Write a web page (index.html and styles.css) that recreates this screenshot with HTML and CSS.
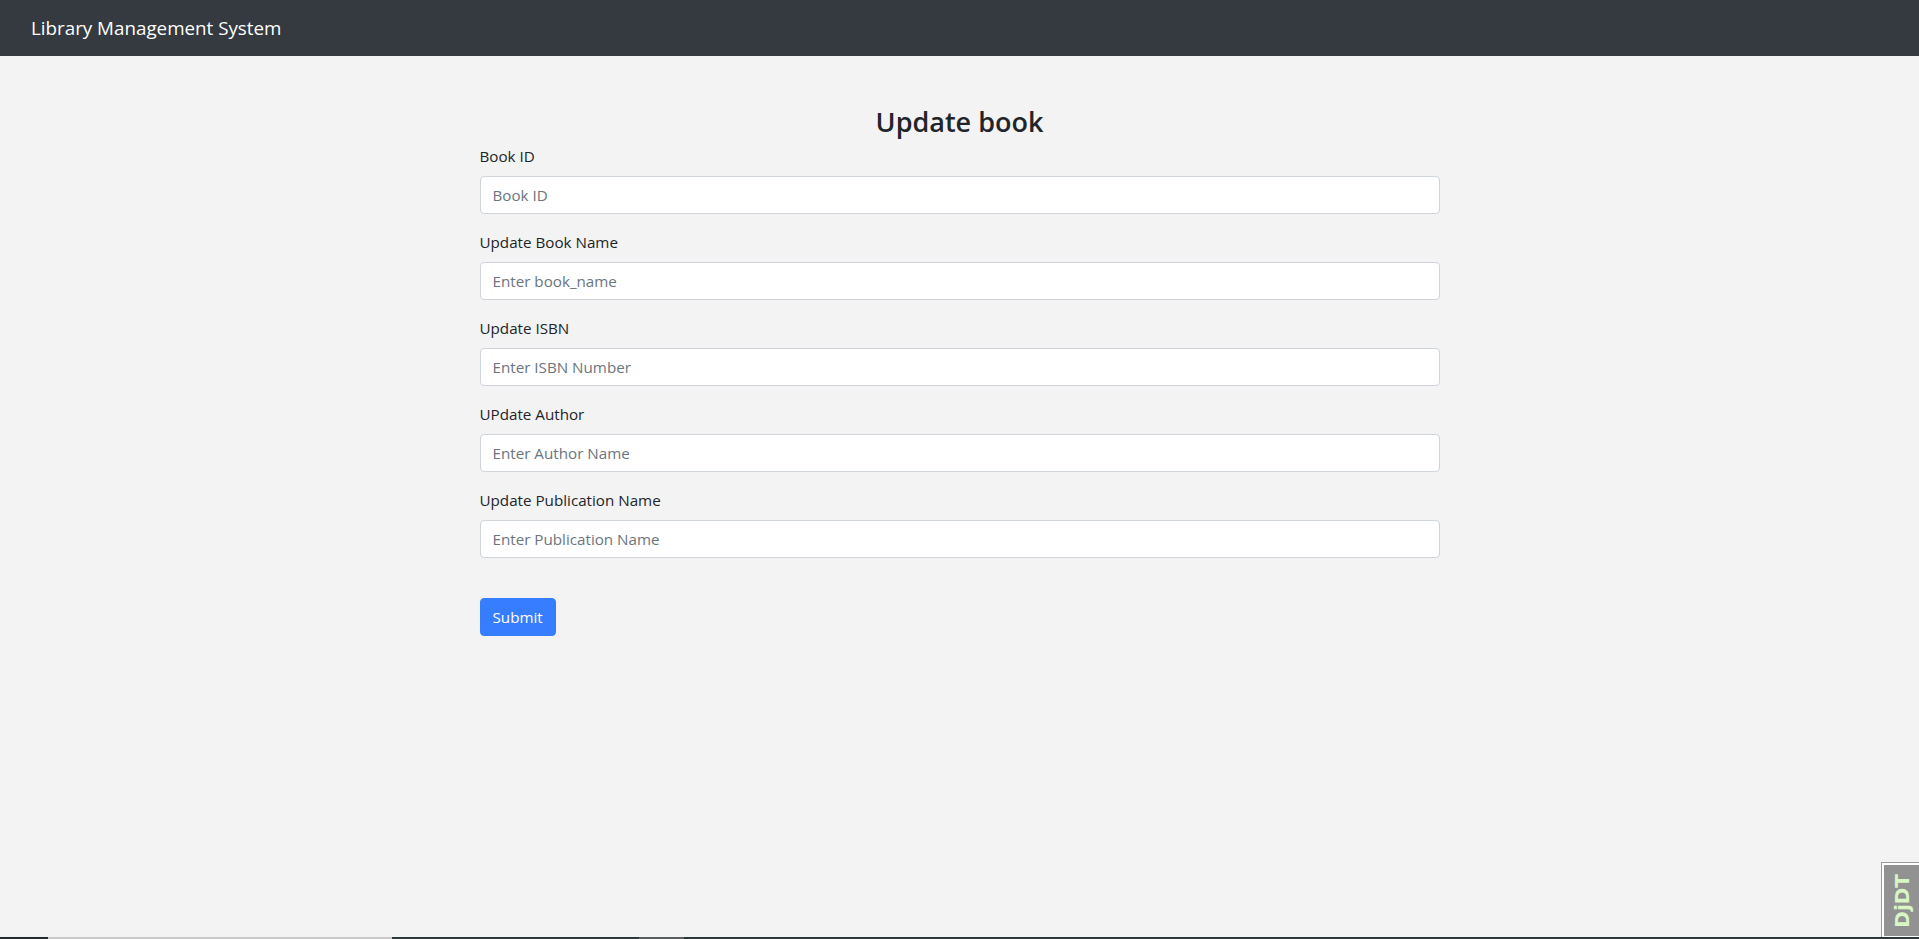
FILE: index.html
```html
<!DOCTYPE html>
<html lang="en">
<head>
<meta charset="utf-8">
<title>Update book</title>
<link rel="stylesheet" href="styles.css">
</head>
<body>
<nav class="navbar">
  <div class="navbar-inner">
    <a class="brand" href="#">Library Management System</a>
  </div>
</nav>
<main class="form-wrap">
  <h3 class="title">Update book</h3>
  <form class="form">
    <div class="field">
      <label>Book ID</label>
      <input type="text" placeholder="Book ID">
    </div>
    <div class="field">
      <label>Update Book Name</label>
      <input type="text" placeholder="Enter book_name">
    </div>
    <div class="field">
      <label>Update ISBN</label>
      <input type="text" placeholder="Enter ISBN Number">
    </div>
    <div class="field">
      <label>UPdate Author</label>
      <input type="text" placeholder="Enter Author Name">
    </div>
    <div class="field">
      <label>Update Publication Name</label>
      <input type="text" placeholder="Enter Publication Name">
    </div>
    <button type="button" class="btn-submit">Submit</button>
  </form>
</main>
<div class="djdt-handle"><span class="djdt-text">DjDT</span></div>
<div class="bottom-strip">
  <span class="seg seg-dark1"></span>
  <span class="seg seg-light"></span>
  <span class="seg seg-dark2"></span>
  <span class="seg seg-gray"></span>
  <span class="seg seg-dark3"></span>
</div>
</body>
</html>
```
FILE: styles.css
```css
html, body {
  margin: 0;
  padding: 0;
}
body {
  background: #f3f3f3;
  color: #212529;
  font-family: "Open Sans", "Noto Sans", "Liberation Sans", sans-serif;
  font-size: 15.2px;
  line-height: 24px;
  min-height: 939px;
}
.navbar {
  background: #343a40;
  height: 56px;
  box-sizing: border-box;
  padding: 8px 16px;
}
.navbar-inner {
  padding: 0 15px;
  display: flex;
  align-items: center;
  height: 40px;
}
.brand {
  color: #ffffff;
  text-decoration: none;
  font-size: 18.8px;
  line-height: 30px;
}
.form-wrap {
  width: 960px;
  margin: 0 auto;
  padding-top: 49px;
}
.title {
  margin: 0 0 5px;
  font-size: 27px;
  font-weight: 600;
  line-height: 34px;
  text-align: center;
}
.field {
  margin-bottom: 16px;
}
.field label {
  display: block;
  margin-bottom: 8px;
  line-height: 24px;
}
.field input {
  display: block;
  width: 100%;
  height: 38px;
  box-sizing: border-box;
  padding: 6px 12px;
  border: 1px solid #ced4da;
  border-radius: 4px;
  background: #fff;
  font-family: inherit;
  font-size: 15.2px;
  color: #495057;
}
.field input::placeholder {
  color: #6c757d;
}
.btn-submit {
  margin-top: 24px;
  height: 38px;
  padding: 6px 12px;
  border: 1px solid #377dff;
  border-radius: 4px;
  background: #377dff;
  color: #fff;
  font-family: inherit;
  font-size: 15.2px;
  line-height: 24px;
}
.djdt-handle {
  position: fixed;
  right: 0;
  top: 863px;
  width: 35px;
  height: 71px;
  background: #929292;
  border: 2px solid #ffffff;
  border-right: none;
  outline: 1px solid #9a9a9a;
  display: flex;
  align-items: center;
  justify-content: center;
}
.djdt-text {
  writing-mode: vertical-rl;
  transform: rotate(180deg);
  color: #d8f7c4;
  font-family: "DejaVu Sans", sans-serif;
  font-weight: bold;
  font-size: 20px;
  line-height: 1;
}
.bottom-strip {
  position: fixed;
  left: 0;
  right: 0;
  bottom: 0;
  height: 2px;
  display: flex;
}
.seg { display: block; height: 2px; }
.seg-dark1 { width: 48px; background: #1f2b2c; }
.seg-light { width: 344px; background: #c9c9c9; }
.seg-dark2 { width: 247px; background: #2b3838; }
.seg-gray { width: 45px; background: #5a5e5e; }
.seg-dark3 { flex: 1; background: #2b3838; }
```
